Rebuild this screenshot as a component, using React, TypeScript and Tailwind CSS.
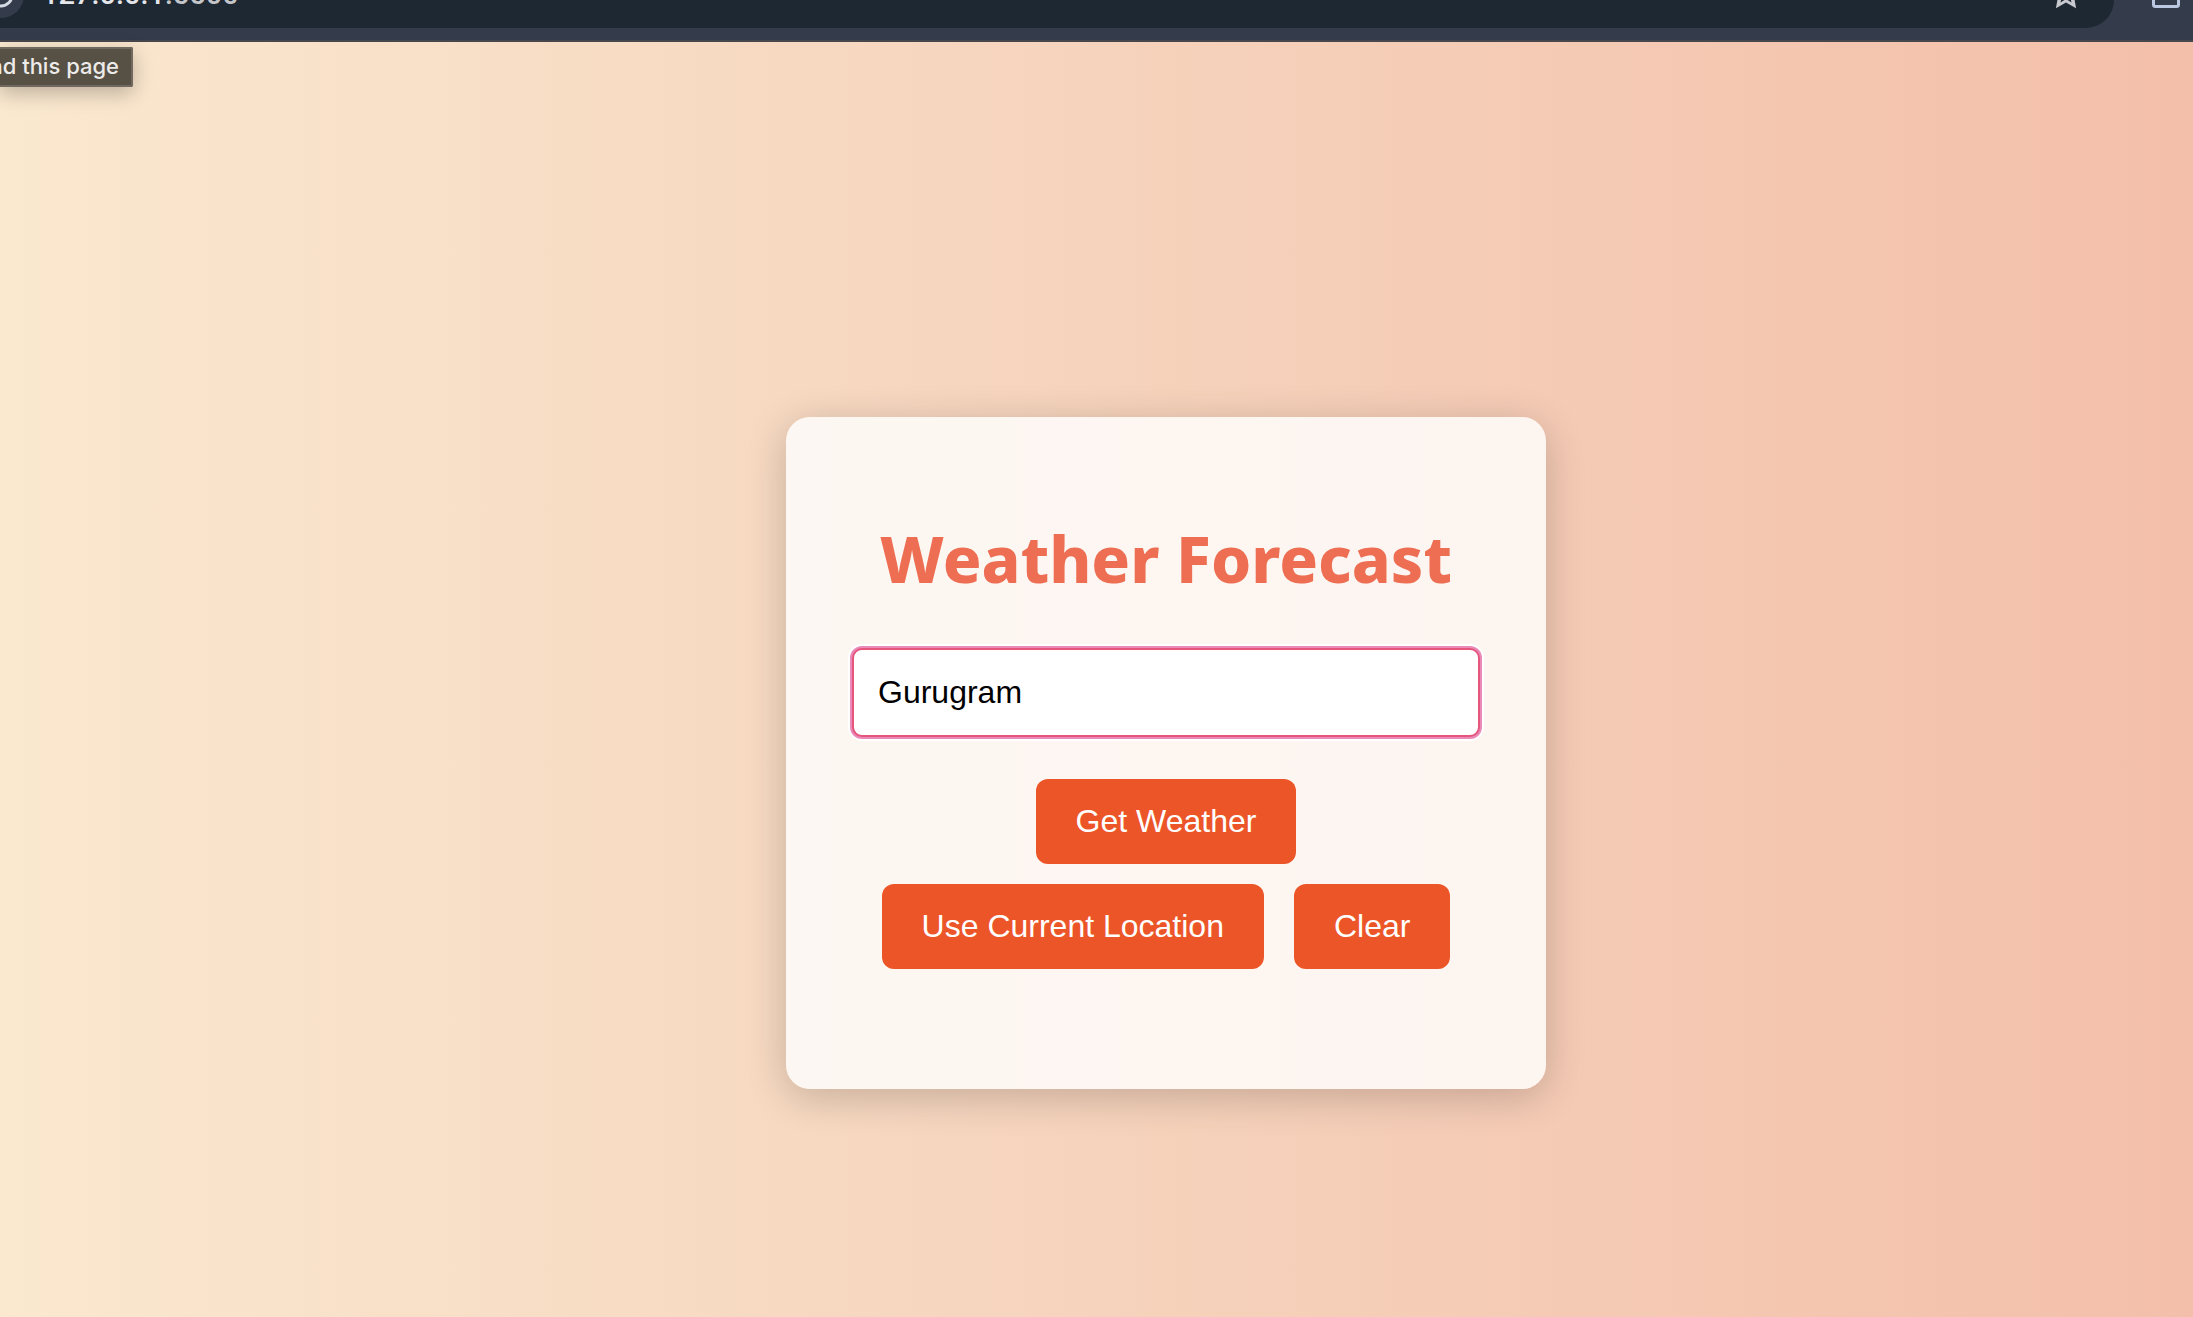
import { useState } from "react";

function BrowserBar() {
  return (
    <header className="relative h-[42px] overflow-hidden border-b-2 border-[#45474c] bg-[#343c4b]">
      <div className="mr-[79px] flex h-[28px] items-start justify-between rounded-br-[32px] bg-[#1e2833] pr-[23px]">
        <div className="flex items-start">
          <svg className="h-[28px] w-[42px]" viewBox="0 0 42 28" aria-hidden="true">
            <circle cx="1" cy="-5" r="23" fill="#343c4b" />
            <circle cx="1" cy="-5" r="11" fill="none" stroke="#d5d9e2" strokeWidth="3" />
          </svg>
          <p className="-mt-[22px] font-['Roboto',sans-serif] text-[29px] leading-[32px] font-medium text-[#e4e6ea]">
            127.0.0.1<span className="text-[#c4c5c9]">:5500</span>
          </p>
        </div>
        <svg className="h-[28px] w-[50px]" viewBox="0 0 50 28" aria-hidden="true">
          <path
            d="M17.500 -6 L14.900 8.200 L25 2.500 L35.100 8.200 L32.500 -6 H28.500 L30.500 2.500 L25 -1 L19.500 2.500 L21.500 -6 Z"
            fill="#c9cacf"
          />
        </svg>
      </div>
      <svg className="absolute top-0 right-[11px] h-[10px] w-[30px]" viewBox="0 0 30 10" aria-hidden="true">
        <rect x="1.500" y="-16" width="25" height="22.500" rx="2" fill="none" stroke="#bcc7e2" strokeWidth="3" />
      </svg>
    </header>
  );
}

const buttonClass =
  "h-[85px] cursor-pointer rounded-xl bg-[#ec5528] px-10 text-[32px] leading-[37px] text-white";

export default function App() {
  const [city, setCity] = useState("Gurugram");
  return (
    <div className="relative flex h-screen flex-col overflow-hidden font-['Liberation_Sans',Arial,sans-serif]">
      <BrowserBar />
      <div
        role="tooltip"
        className="absolute top-[47px] left-0 flex h-[40px] w-[133px] items-center justify-end rounded-r-[2px] border-2 border-l-0 border-[#6f695f] bg-[#565045] pr-[12px] pb-[2px] font-['Inter',sans-serif] text-[22px] leading-[26px] font-medium whitespace-nowrap text-[#edebe9] shadow-[0_6px_20px_rgba(0,0,0,0.25)]"
      >
        Reload this page
      </div>
      <main className="flex grow items-start justify-center bg-linear-to-r from-[#fae8cf] via-[#f6d3bc] to-[#f3bfaa] pt-[375px] pl-[139px]">
        <section className="flex w-[760px] flex-col items-center rounded-3xl bg-white/80 px-[66px] pt-[98px] pb-[120px] shadow-[0_8px_40px_rgba(0,0,0,0.2)]">
          <h1 className="font-['Noto_Sans',sans-serif] text-[64px] leading-[88px] font-extrabold whitespace-nowrap text-[#ed6e52]">
            Weather Forecast
          </h1>
          <form className="mt-[45px] flex w-full flex-col items-center" onSubmit={(e) => e.preventDefault()}>
            <input
              type="text"
              aria-label="City"
              value={city}
              onChange={(e) => setCity(e.target.value)}
              className="h-[89px] w-full rounded-[10px] border-2 border-[#e5557c] bg-white px-6 text-[32px] text-black shadow-[0_0_0_2px_#e98ab8,0_0_0_4px_#ffffff] outline-none"
            />
            <button type="submit" className={`mt-[42px] ${buttonClass}`}>
              Get Weather
            </button>
            <div className="mt-5 flex gap-[30px] whitespace-nowrap">
              <button type="button" className={buttonClass}>
                Use Current Location
              </button>
              <button type="button" className={buttonClass} onClick={() => setCity("")}>
                Clear
              </button>
            </div>
          </form>
        </section>
      </main>
    </div>
  );
}
